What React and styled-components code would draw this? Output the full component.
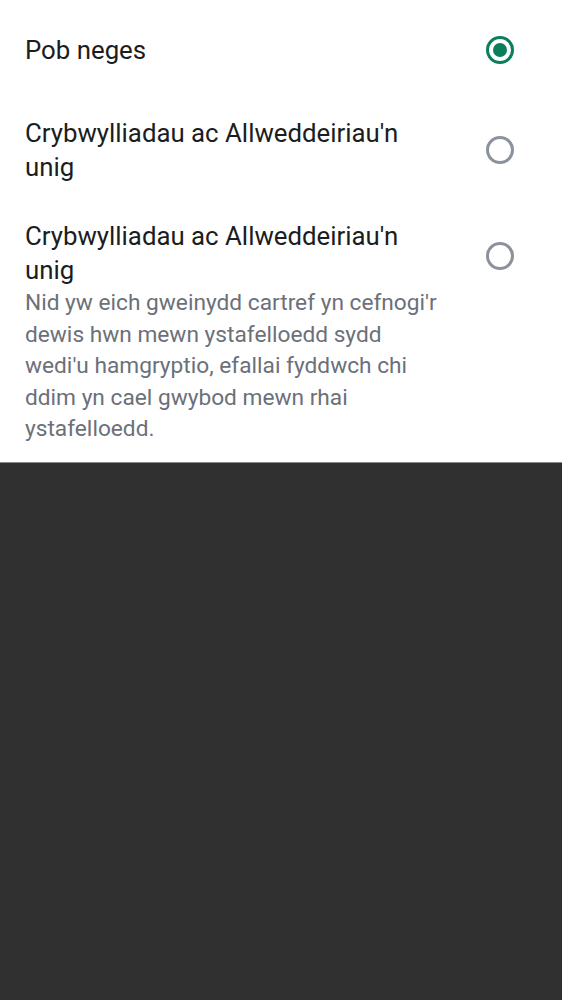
import React, { useState } from "react";
import styled, { createGlobalStyle } from "styled-components";

const Global = createGlobalStyle`
  html, body { margin: 0; padding: 0; background: #303030; }
  body { font-family: Roboto, "Noto Sans", sans-serif; }
`;

const Sheet = styled.div`
  background: #ffffff;
  border-bottom: 1px solid #8a8a8a;
`;

const Row = styled.label`
  display: flex;
  align-items: ${(p) => (p.$top ? "flex-start" : "center")};
  min-height: ${(p) => p.$min || 0}px;
  padding: ${(p) => p.$pt}px 48px ${(p) => p.$pb}px 25px;
  box-sizing: border-box;
  cursor: pointer;
`;

const TextCol = styled.div`
  width: 420px;
  flex: 0 0 420px;
`;

const Title = styled.div`
  font-size: 25.8px;
  line-height: 34px;
  color: #1b1d21;
`;

const Desc = styled.div`
  font-size: 22.7px;
  line-height: 31.5px;
  color: #6b7079;
`;

const RadioWrap = styled.div`
  margin-left: auto;
  margin-top: ${(p) => p.$mt || 0}px;
  width: 28px;
  height: 28px;
  flex: 0 0 28px;
`;

const Ring = styled.div`
  width: 28px;
  height: 28px;
  box-sizing: border-box;
  border-radius: 50%;
  border: 3px solid ${(p) => (p.$on ? "#0b7e5b" : "#8b929c")};
  display: flex;
  align-items: center;
  justify-content: center;
`;

const Dot = styled.div`
  width: 14px;
  height: 14px;
  border-radius: 50%;
  background: #0b7e5b;
`;

function Radio({ on, mt }) {
  return (
    <RadioWrap $mt={mt}>
      <Ring $on={on}>{on && <Dot />}</Ring>
    </RadioWrap>
  );
}

export default function App() {
  const [sel, setSel] = useState(0);
  return (
    <>
      <Global />
      <Sheet>
        <Row $min={100} $pt={0} $pb={0} onClick={() => setSel(0)}>
          <TextCol>
            <Title>Pob neges</Title>
          </TextCol>
          <Radio on={sel === 0} />
        </Row>
        <Row $min={100} $pt={16} $pb={16} onClick={() => setSel(1)}>
          <TextCol>
            <Title>
              Crybwylliadau ac Allweddeiriau'n
              <br />
              unig
            </Title>
          </TextCol>
          <Radio on={sel === 1} />
        </Row>
        <Row $top $pt={19} $pb={17} onClick={() => setSel(2)}>
          <TextCol>
            <Title>
              Crybwylliadau ac Allweddeiriau'n
              <br />
              unig
            </Title>
            <Desc>
              Nid yw eich gweinydd cartref yn cefnogi'r
              <br />
              dewis hwn mewn ystafelloedd sydd
              <br />
              wedi'u hamgryptio, efallai fyddwch chi
              <br />
              ddim yn cael gwybod mewn rhai
              <br />
              ystafelloedd.
            </Desc>
          </TextCol>
          <Radio on={sel === 2} mt={23} />
        </Row>
      </Sheet>
    </>
  );
}
